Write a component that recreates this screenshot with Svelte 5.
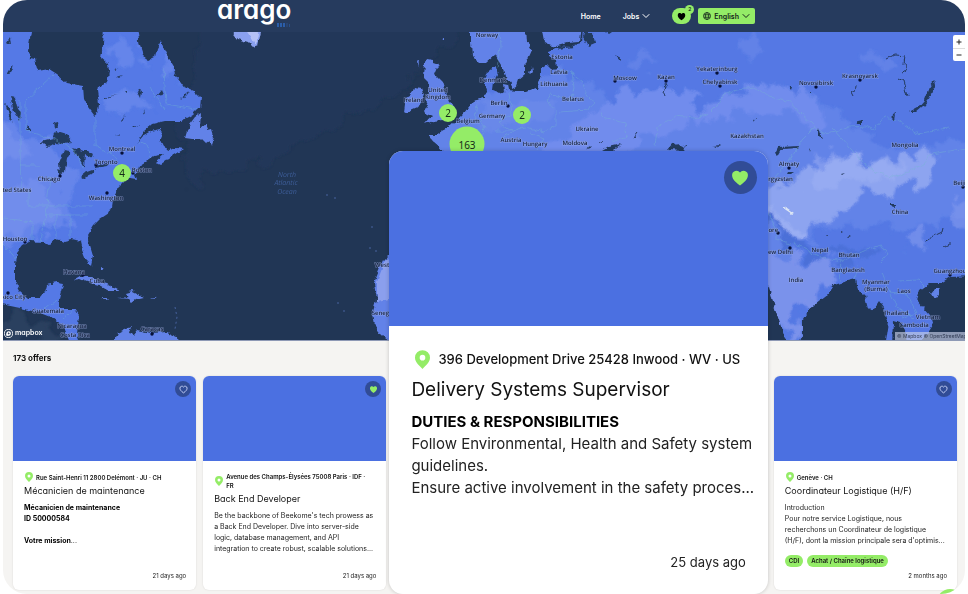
<script>
  const clusters = [
    { count: 4, x: 122, y: 173, size: 18 },
    { count: 2, x: 448, y: 113, size: 18 },
    { count: 2, x: 522, y: 115, size: 18 },
    { count: 163, x: 467, y: 144, size: 35 },
  ];

  const countries = [
    ['United States', 12, 192], ['Cuba', 97, 283], ['Guatemala', 48, 313],
    ['Nicaragua', 72, 328], ['Costa Rica', 75, 337], ['Norway', 487, 37],
    ['Denmark', 493, 82], ['United', 438, 92], ['Kingdom', 438, 99],
    ['Ireland', 414, 102], ['Germany', 492, 118], ['Belgium', 468, 123],
    ['Austria', 511, 142], ['Hungary', 535, 146], ['Estonia', 562, 59],
    ['Latvia', 559, 74], ['Lithuania', 554, 86], ['Belarus', 573, 101],
    ['Ukraine', 587, 131], ['Moldova', 575, 145], ['Kazakhstan', 747, 138],
    ['Mongolia', 905, 147], ['Kyrgyzstan', 777, 181], ['China', 900, 214],
    ['Nepal', 820, 252], ['Bhutan', 849, 257], ['Bangladesh', 848, 272],
    ['India', 796, 282], ['Myanmar', 876, 284], ['(Burma)', 876, 291],
    ['Laos', 904, 293], ['Thailand', 896, 315], ['Vietnam', 928, 319],
    ['Cambodia', 914, 327], ['Senegal', 383, 315], ['Western', 387, 267],
  ];

  // label, label x, label y, dot x, dot y
  const cities = [
    ['Montreal', 122, 151, 122, 153], ['Toronto', 106, 164, 96, 165],
    ['Boston', 142, 172, 133, 173], ['Chicago', 49, 181, 60, 176],
    ['Washington', 106, 200, 107, 193], ['Houston', 15, 241, 25, 242],
    ['Havana', 74, 274, 83, 275], ['Mexico City', 9, 299, 8, 293],
    ['Caracas', 152, 331, 152, 334], ['Berlin', 499, 105, 508, 106],
    ['Moscow', 625, 80, 615, 81], ['Kazan', 666, 79, 666, 81],
    ['Yekaterinburg', 717, 71, 717, 73], ['Chelyabinsk', 720, 84, 720, 86],
    ['Novosibirsk', 816, 85, 816, 87], ['Krasnoyarsk', 860, 78, 860, 80],
    ['Almaty', 789, 166, 789, 168], ['Lahore', 768, 232, 778, 233],
    ['New Delhi', 778, 254, 790, 248], ['Guangzhou', 950, 273, 950, 275],
    ['Beijing', 963, 185, 963, 187],
  ];

  let jobs = $state([
    {
      location: 'Rue Saint-Henri 11 2800 Delémont · JU · CH',
      title: 'Mécanicien de maintenance',
      heading: 'Mécanicien de maintenance\nID 50000584\n\nVotre mission',
      text: '...',
      tags: [],
      age: '21 days ago',
      saved: false,
    },
    {
      location: 'Avenue des Champs-Élysées 75008 Paris · IDF ·\nFR',
      title: 'Back End Developer',
      text: "Be the backbone of Beekome's tech prowess as\na Back End Developer. Dive into server-side\nlogic, database management, and API\nintegration to create robust, scalable solutions...",
      tags: [],
      age: '21 days ago',
      saved: true,
    },
    {
      featured: true,
      location: '396 Development Drive 25428 Inwood · WV · US',
      title: 'Delivery Systems Supervisor',
      heading: 'DUTIES & RESPONSIBILITIES\n',
      text: 'Follow Environmental, Health and Safety system\nguidelines.\nEnsure active involvement in the safety proces...',
      tags: [],
      age: '25 days ago',
      saved: true,
    },
    {
      last: true,
      location: 'Genève · CH',
      title: 'Coordinateur Logistique (H/F)',
      text: "Introduction\nPour notre service Logistique, nous\nrecherchons un Coordinateur de logistique\n(H/F), dont la mission principale sera d'optimis...",
      tags: ['CDI', 'Achat / Chaîne logistique'],
      age: '2 months ago',
      saved: false,
    },
  ]);
</script>

<div class="page">
  <header class="header">
    <a class="logo" href="#home">
      arago
      <svg class="logo-mark" viewBox="0 0 14 4" aria-hidden="true">
        <path d="M1 0v4M4 0v4M7 0v4" stroke="#2d68bd" stroke-width="1.6" />
        <path d="M10 0v4M12.5 1v3" stroke="#2a4f88" stroke-width="1" />
      </svg>
    </a>
    <nav class="nav">
      <a href="#home">Home</a>
      <a class="jobs-link" href="#jobs">
        Jobs
        <svg class="chevron" viewBox="0 0 8 8"><path d="M1 2.5l3 3 3-3" /></svg>
      </a>
      <div class="actions">
        <button class="saved" aria-label="Saved jobs">
          <svg viewBox="0 0 24 24"><path d="M12 22C5 17 2 13 2 8.500A5.500 5.500 0 0 1 12 5a5.500 5.500 0 0 1 10 3.500C22 13 19 17 12 22z" /></svg>
          <span class="saved-count">2</span>
        </button>
        <button class="language">
          <svg class="globe" viewBox="0 0 16 16">
            <circle cx="8" cy="8" r="7" />
            <ellipse cx="8" cy="8" rx="3" ry="7" />
            <path d="M1.500 5.500h13M1.500 10.500h13" />
          </svg>
          English
          <svg class="chevron" viewBox="0 0 8 8"><path d="M1 2.5l3 3 3-3" /></svg>
        </button>
      </div>
    </nav>
  </header>

  <section class="map" aria-label="Map of offers">
    <svg class="map-canvas" viewBox="3 32 962 308" preserveAspectRatio="xMidYMid slice">
      <defs>
        <filter id="coast" x="-5%" y="-5%" width="110%" height="110%">
          <feTurbulence type="fractalNoise" baseFrequency="0.13" numOctaves="3" seed="4" />
          <feDisplacementMap in="SourceGraphic" scale="6" xChannelSelector="R" yChannelSelector="G" />
        </filter>
        <filter id="terrain" x="-5%" y="-5%" width="110%" height="110%">
          <feTurbulence type="fractalNoise" baseFrequency="0.05" numOctaves="4" seed="9" />
          <feDisplacementMap in="SourceGraphic" scale="34" xChannelSelector="R" yChannelSelector="G" />
          <feGaussianBlur stdDeviation="0.8" />
        </filter>
        <clipPath id="eurasia">
          <path d="M583 26H974V276L950 277 941 283 930 283 920 290 917 300 930 315 933 325 926 336 918 348H908L905 330 900 322 893 320 892 348H884L888 322 884 308 879 301 875 307 868 309 865 297 858 290 856 279 848 281 834 285 828 294 810 308 803 320 803 334 797 348H788L779 320 773 302 769 285 760 300H480L446 156 440 147 432 140 428 135 437 135 442 131 450 127 457 120 464 113 474 101 484 98 487 90 484 80 486 73 491 69 495 66 497 74 493 82 492 90 499 93 509 90 517 91 527 91 537 88 542 77 542 68 547 65 552 70 557 69 556 60 548 56 548 51 558 47 571 46 582 43z" />
        </clipPath>
        <clipPath id="americas">
          <path d="M-4 26H32L28 50 30 59 35 60 38 71 49 69 57 74 67 83 83 86 84 99 88 107 94 115 98 112 99 104 97 90 107 82 109 72 108 63 101 57 103 45 104 26H137L140 47 143 56 149 60 155 57 157 48 161 41 165 52 172 62 176 76 183 86 194 91 201 98 200 108 193 115 188 118 182 121 165 121 152 124 143 132 136 143 142 136 151 131 160 129 163 134 160 141 163 147 169 150 177 148 183 149 172 156 160 164 156 162 165 154 154 156 149 160 141 165 135 174 137 179 131 178 124 181 119 186 117 193 113 200 112 207 109 213 100 219 93 226 88 234 90 246 93 256 91 265 86 260 82 250 80 241 72 239 64 241 56 239 50 244 43 242 30 241 22 245 16 253 15 267 15 281 20 291 28 298 40 298 45 292 47 285 57 283 63 284 60 295 58 303 60 309 75 309 79 315 78 326 77 333 82 348H72L66 333 62 325 53 318 40 313 20 308 -4 303z" />
        </clipPath>
      </defs>

      <rect x="0" y="30" width="970" height="312" fill="#213655" />
      <g filter="url(#terrain)">
        <path d="M205 20h265l-70 72-120 60-90 30-12-60z" fill="#25395b" opacity=".7" />
        <path d="M3 310l90 30H3z" fill="#29405f" />
      </g>

      <g filter="url(#coast)">
        <g clip-path="url(#americas)">
          <rect x="-6" y="20" width="226" height="330" fill="#5479e6" />
          <g filter="url(#terrain)">
            <path d="M-10 122l28 5 20 13 22 10 14 28-10 22 8 20-28 18-20 2-10 15h-24z" fill="#6685ea" />
            <path d="M-10 195l41-12 20 10 6 30-28 10-39 2zM0 130l16 4 10 16-10 12-20 4z" fill="#7c96ee" opacity=".5" />
            <path d="M118 36l20 5 4 18-14 8-15-10zM162 45l8 12 5 28-12-8zM103 95l30-6 26 13-13 12-25-2z" fill="#7f99ef" opacity=".4" />
          </g>
          <g class="lake">
            <path d="M41 142l12-3 3-8 10 3 7 8-8 1-10-1-7 5zM60 175l-1-12 5-12 7 1-4 6-2 13zM72 148l10 3 6 0 5 3-1 5-7-4-1 12-4-7zM80 177l5-4 11-4-4 5-9 4zM95 166l14-3-2 3-12 2z" />
            <path d="M10 97l5 1 3 12 3 3-1 8-5-7zM5 103l4 12 4 7-2-13zM10 37l-3 5 4 3zM11 67l-4 7 6-4zM157 96l5-6 2 5zM181 99l9-7-4 5zM104 97l14-2-13 3zM137 89l5 2-1 6zM120 120l4-5-3 6zM53 123l4-1 1 6-4-1zM26 131l2-5 4 5zM113 70l5-2-4 3zM117 77l6-2-4 3zM124 91l5 0-3 2zM143 113l2-3 1 4zM133 127l3-2 3 2zM114 134l5-1-2 2z" />
          </g>
          <path class="border" d="M26 131V100L54 74M26 131l28 8 11 5 10 7 8 18M95 115v31l23 13M20 100v50l1 40M28 190v17M20 165h20M28 206h64M45 215h42M32 224v17M56 215v25M70 215v24M3 218l30 4M164 70l2 34 35 6M150 88l14 22M138 143l10 2 3 16M3 244l14 17M45 308l10-8M64 318l10-8M50 175l-4 40-5 26" />
        </g>

        <g fill="#6282e8">
          <path d="M185 138l4-13 6-8 6-4-1 13 6-1 2 5 4-1 2 7-3 9-3-3-3 2-5-5-8 0z" />
          <path d="M73 280l7-4 8 0 8 5 11 3 12 6-11 0-9-5-12-3-7-3zM119 298l8-1-2-4 7-2 12 6-9 2-4 3-3-3zM101 298l8 0-2 2zM150 297l7 1-3 1zM102 266l2 4-2 0z" />
          <path d="M112 347l5-14 14-7-2 8 4 1 4-5 14 3 15-1 11 5 1 10z" />
          <path d="M395 249l-12 12-9 22 3 17-4 14 2 12 7 9 8 6 10-1V250z" />
          <path d="M471 26v16l1 14 7 7h7l9-8 6 10 4 10 8 13 4-2 2-6 6-5 0-9 3-7 4-9-5-8-1-16zM541 26l3 16 10 5 14-4 12-1 2-16z" />
          <path d="M425 62l2-4 6 1 0 4 6 2-4 10 7 7 3 10 4 10 6 5-3 9 1 4-10 0-10 1-8 3 7-8-8-4 4-7-3-6 4-8-1-9-4-4zM414 87l7 1 3 8-4 10-7 3-9 4 1-8-1-6 7-4zM418 61l2-2-1 8z" />
          <path d="M503 84l5 1 1 5-5 1zM530 75l2-8 1 5zM442 41l2-3 0 4z" />
        </g>
        <path d="M228 26h34l-4 19-5 2-5-5-10-3z" fill="#8aa0ef" />
        <path d="M242 26h17l-3 18-5-5z" fill="#b5c1f5" />
        <path d="M386 258l-9 24 0 20 13-3v-40z" fill="#8b9fed" />

        <g clip-path="url(#eurasia)">
          <rect x="420" y="20" width="560" height="330" fill="#5478e4" />
          <g filter="url(#terrain)">
            <path d="M420 100l70-10 70-20 50 30 110 15 30-15 60-4 40 22 30 30 100-5V215l-70 15-60-5-60 20-10 100H440z" fill="#6283e8" />
            <path d="M600 104l45-15 50 5 5 25 25-25 75-8 15 20 13 18-20 5-18-20-50 2-40 12-30 5-40 18-20 28H555l-10-22z" fill="#718ced" />
            <path d="M760 190l23-10 35-8 30-18 25 6 64-7-8 25-20 14-44-2-25 22-20 14-18 12-34-15z" fill="#8da4f0" />
            <path d="M815 160l35-5 30 8 25 1-20 16-35-2-40 10z" fill="#a0b2f3" opacity=".5" />
            <path d="M755 208l41 12 15 15-12 4-28-14z" fill="#a0b2f4" opacity=".7" />
            <path d="M755 256l43 2 38 4-5 20-30 25-7 35-40-45z" fill="#7a92eb" />
            <path d="M905 236l12-6 8 8-8 10-10-3zM950 210l20-16v40l-19-6z" fill="#7d96ed" opacity=".7" />
            <path d="M735 40l18-4 8 12-10 6zM475 100l30 5 50-2-10 18-60 10zM620 60l20-8 18 12-24 4zM860 60l24-6 12 10-20 8z" fill="#748fec" opacity=".45" />
            <path d="M760 214c20 18 33 32 53 39 22 5 40 2 65-5" fill="none" stroke="#4c70d8" stroke-width="8" />
          </g>
          <path d="M783 206l11 8-2 1-9-6z" fill="#dbe5f4" />
          <g class="lake">
            <path d="M934 81l1 4-4 11-8 10-7 6-7 0 9-5 6-7 5-13zM775 153l3-6 21-1-1 2-16 1-4 7zM668 150l4-5 9-1 4 3-1 4zM584 33l9 0 2 10-7 3-5-9zM562 44l18-2-6 5-17 2zM615 56l6 3-1 3zM602 150l7-4 13-3-6 5-5 5h-7zM585 149l7-3-3 4zM612 32l-3 2-3-2z" />
            <path d="M857 121l5-1 0 4-4 0zM893 114l2-1-1 7-2 0zM817 127l2 8 5 4-7-2zM787 172l7 0-3 2-5 0zM810 148l2 1-1 4zM890 204l4 0 0 3-3-1zM842 231l2 1-2 1zM848 237l3 0-2 1zM790 87l3 0-1 3zM753 120l3-1-2 3zM712 147l8-1-4 3zM840 173l4-1-3 2zM827 236l3 0-2 1z" />
            <path class="river" d="M887 59l8-4 10 1-1 8 3 6-5 3M898 78l5 3 4 15M666 83l2 5-4 3 2 5M855 85l-1 6-3 2 2 4M815 88l-5 5M635 137l3-4M924 242l10-6 8-4 1-4M944 247l6-3 0-3M598 143l4-2" />
          </g>
          <path class="border" d="M655 146l2-18 18-12 18 2 14-3 9-9 7-11 15-6 17-2 14 10 22 5 10 12 22 20 14-2 12-5 17-1 8 4 10-13 14 3 20 14 30-6M833 128l18 20 10 12 13 12 22 5 28-13 8-10 34-6M816 126l-14 14-12 20-16 18M556 68l16 4 2 16-4 12-18-6-5 7 9 10 0 14-12 7-19-5-12 4-18 0M570 72l12 10 5 12 6 8-4 8-30 2M600 112l3 5 22 6 2 14-14 5M477 103l-2 15 10 8-6 14M509 92l3 22-13 8 14 10-10 6M530 132l14 6-8 12M768 213l8 15 0 12 14 4M793 242l23 14 26 5 8-4 14-6 17-6 6 9-6 8M842 261l-2 20M858 264l-3 15M882 272l6 16 10 20 16 10M898 281l20-1 6 6M574 32l-10 9M889 292l18 2 9 19-14 5" />
        </g>
        <path d="M930 294l4-5 6 0-2 7-5 3z" fill="#6283e8" />
        <path class="border" d="M500 32l1 15M500 47l-3 20" />
      </g>
      <path d="M326 195h3M334 198h3M371 227h2M369 248h3M375 251h3M337 303h3M343 311h2M175 307l2 10-2 12" fill="none" stroke="#48639f" stroke-dasharray="2 3" />

      <g class="sea-label">
        <text x="287" y="177">North</text>
        <text x="286" y="185">Atlantic</text>
        <text x="287" y="194">Ocean</text>
      </g>
      <g class="country">
        {#each countries as [name, x, y]}
          <text {x} {y}>{name}</text>
        {/each}
      </g>
      <g class="city">
        {#each cities as [name, x, y, cx, cy]}
          <circle {cx} {cy} r="1.700" />
          <text {x} {y}>{name}</text>
        {/each}
      </g>
    </svg>

    {#each clusters as c}
      <button
        class="cluster"
        style="left: {((c.x - 3) / 962) * 100}%; top: {((c.y - 32) / 308) * 100}%; width: {c.size}px; height: {c.size}px"
      >{c.count}</button>
    {/each}

    <div class="zoom">
      <button aria-label="Zoom in"><svg viewBox="0 0 8 8"><path d="M4 1.500v5M1.500 4h5" /></svg></button>
      <button aria-label="Zoom out"><svg viewBox="0 0 8 8"><path d="M1.500 4h5" /></svg></button>
    </div>
    <a class="mapbox" href="#mapbox">
      <svg viewBox="0 0 20 20">
        <circle cx="10" cy="10" r="9" fill="none" stroke="#fff" stroke-width="2" />
        <path d="M5 15c-1-6 1-10 6-10 3 0 5 3 4 6-1 4-5 5-10 4z" fill="#fff" />
        <path d="M10.500 6.500l1 2.200 2 .8-2 1-1 2-1-2-2-1 2-.8z" fill="#213655" />
      </svg>
      mapbox
    </a>
    <div class="attribution">© Mapbox © OpenStreetMap</div>
  </section>

  <main class="offers">
    <h1>173 offers</h1>
    <div class="grid">
      {#each jobs as job}
        <article class="card" class:featured={job.featured} class:last={job.last}>
          <div class="cover">
            <button class="like" class:saved-like={job.saved} aria-label="Save {job.title}" onclick={() => (job.saved = !job.saved)}>
              <svg viewBox="0 0 24 24"><path d="M12 21C5 16 2.500 12.500 2.500 8.500A5.200 5.200 0 0 1 12 5.500a5.200 5.200 0 0 1 9.500 3C21.500 12.500 19 16 12 21z" /></svg>
            </button>
          </div>
          <div class="body">
            <div class="location">
              <svg class="pin" viewBox="0 0 16 20"><path fill-rule="evenodd" d="M8 0a8 8 0 0 1 8 8c0 5-5 8.500-8 12C5 16.500 0 13 0 8a8 8 0 0 1 8-8zm0 5a3 3 0 1 0 0 6 3 3 0 0 0 0-6z" /></svg>
              <span>{job.location}</span>
            </div>
            <h2>{job.title}</h2>
            <p>{#if job.heading}<strong>{job.heading}</strong>{/if}{job.text}</p>
            <div class="bottom">
              {#if job.tags.length}
                <div class="tags">
                  {#each job.tags as tag}
                    <span class="tag">{tag}</span>
                  {/each}
                </div>
              {/if}
              <time>{job.age}</time>
            </div>
          </div>
        </article>
      {/each}
    </div>
    <button class="chat" aria-label="Open chat"></button>
  </main>
</div>

<style>
  :global(body) {
    background: #fff;
    overflow: hidden;
  }

  .page {
    --green: #94ec67;
    --blue: #4b70e1;
    --navy: #263b5e;
    display: flex;
    flex-direction: column;
    min-height: 100vh;
    margin: 0 3px;
    border-radius: 24px;
    overflow: hidden;
    background: #f5f4f2;
    color: #111;
    font-family: Inter, "Liberation Sans", sans-serif;
  }

  button {
    border: 0;
    padding: 0;
    font-family: inherit;
    color: inherit;
    cursor: pointer;
  }

  a {
    color: inherit;
    text-decoration: none;
  }

  .header {
    display: flex;
    align-items: center;
    justify-content: space-between;
    height: 32px;
    padding: 0 210px 0 214px;
    background: var(--navy);
    color: #fff;
  }

  .logo {
    position: relative;
    height: 32px;
    font-size: 26px;
    font-weight: 600;
    line-height: 20px;
    font-feature-settings: "cv11";
  }

  .logo-mark {
    position: absolute;
    right: 0;
    bottom: 5px;
    width: 14px;
    height: 4px;
  }

  .nav {
    display: flex;
    align-items: center;
    gap: 22px;
    font-size: 7px;
    font-weight: 600;
  }

  .jobs-link,
  .actions {
    display: flex;
    align-items: center;
    gap: 3px;
  }

  .actions {
    gap: 7px;
    color: #14251b;
  }

  .chevron {
    width: 8px;
    height: 8px;
    fill: none;
    stroke: currentColor;
    stroke-linecap: round;
    stroke-linejoin: round;
  }

  .saved {
    position: relative;
    display: grid;
    place-items: center;
    width: 19px;
    height: 16px;
    border-radius: 8px;
    background: var(--green);
  }

  .saved svg {
    width: 9px;
    height: 9px;
    fill: #000;
  }

  .saved-count {
    position: absolute;
    top: -3px;
    right: -3px;
    width: 9px;
    border-radius: 50%;
    background: var(--green);
    font-size: 5px;
    font-weight: 600;
    line-height: 9px;
  }

  .language {
    display: flex;
    align-items: center;
    gap: 3px;
    height: 16px;
    padding: 0 5px;
    border-radius: 2px;
    background: var(--green);
    font-size: 7px;
    font-weight: 600;
  }

  .globe {
    width: 8px;
    height: 8px;
    fill: none;
    stroke: currentColor;
    stroke-width: 1.5;
  }

  .map {
    position: relative;
    height: 308px;
    overflow: hidden;
    border-bottom: 1px solid #8e99b5;
    background: #213655;
  }

  .map-canvas {
    display: block;
    width: 100%;
    height: 100%;
    font-family: "Open Sans", "Noto Sans", sans-serif;
    text-anchor: middle;
    text-rendering: geometricPrecision;
  }

  .lake {
    fill: #243a5e;
  }

  .river {
    fill: none;
    stroke: #243a5e;
  }

  .border {
    fill: none;
    stroke: #76b8cf;
    stroke-width: 0.6;
    stroke-linejoin: round;
    opacity: 0.6;
  }

  .country,
  .city {
    fill: #14213f;
    font-size: 6px;
    font-weight: 600;
    paint-order: stroke;
    stroke: #a3b4e8;
    stroke-width: 1;
    stroke-opacity: 0.6;
  }

  .city circle {
    fill: #071138;
    stroke: none;
  }

  .sea-label {
    fill: #3d5d98;
    font-size: 7px;
    font-style: italic;
  }

  .cluster {
    position: absolute;
    transform: translate(-50%, -50%);
    border-radius: 50%;
    background: var(--green);
    color: #142b18;
    font: 10px "Noto Sans", sans-serif;
  }

  .zoom {
    position: absolute;
    top: 3px;
    right: 0;
    display: flex;
    flex-direction: column;
    width: 12px;
    border-radius: 2px 0 0 2px;
    background: #fff;
  }

  .zoom button {
    display: grid;
    place-items: center;
    height: 13px;
    background: none;
  }

  .zoom button + button {
    border-top: 1px solid #ddd;
  }

  .zoom svg {
    width: 8px;
    height: 8px;
    stroke: #222;
  }

  .mapbox {
    position: absolute;
    left: 1px;
    bottom: 2px;
    display: flex;
    align-items: center;
    gap: 2px;
    color: #fff;
    font-size: 7px;
    font-weight: 600;
    line-height: 10px;
    font-feature-settings: "cv11";
  }

  .mapbox svg {
    width: 9px;
    height: 9px;
  }

  .attribution {
    position: absolute;
    right: 0;
    bottom: 0;
    width: 68px;
    padding-left: 2px;
    overflow: hidden;
    background: rgba(200, 208, 232, 0.65);
    color: #333d55;
    font-size: 5px;
    line-height: 8px;
    white-space: nowrap;
  }

  .offers {
    position: relative;
    flex: 1;
    padding: 12px 8px 4px 10px;
  }

  h1 {
    margin: 0 0 12px;
    font-size: 8px;
    font-weight: 700;
    line-height: 11px;
  }

  .grid {
    position: relative;
    display: grid;
    grid-template-columns: repeat(5, 1fr);
    gap: 7px;
  }

  .card {
    display: flex;
    flex-direction: column;
    min-height: 214px;
    border-radius: 6px;
    overflow: hidden;
    background: #fff;
    box-shadow: 0 0 2px rgba(0, 0, 0, 0.12);
  }

  .card.last {
    grid-column: 5;
  }

  .cover {
    position: relative;
    height: 85px;
    background: var(--blue);
  }

  .like {
    position: absolute;
    top: 5px;
    right: 5px;
    display: grid;
    place-items: center;
    width: 16px;
    height: 16px;
    border-radius: 50%;
    background: #314c96;
  }

  .like svg {
    width: 9px;
    height: 9px;
    fill: none;
    stroke: #c7d2f7;
    stroke-width: 2.5;
  }

  .like.saved-like svg {
    fill: var(--green);
    stroke: none;
  }

  .body {
    display: flex;
    flex: 1;
    flex-direction: column;
    padding: 11px 10px 9px 11px;
  }

  .location {
    display: flex;
    align-items: center;
    gap: 3px;
    min-height: 10px;
    padding-left: 1px;
    font-size: 6px;
    font-weight: 600;
    line-height: 9px;
    white-space: pre;
  }

  .pin {
    flex: none;
    width: 8px;
    height: 10px;
    fill: var(--green);
  }

  h2 {
    margin: 2px 0 4px;
    font-size: 9px;
    font-weight: 400;
    line-height: 14px;
    font-feature-settings: "cv11";
    white-space: nowrap;
  }

  p {
    margin: 0;
    font-size: 7px;
    line-height: 11px;
    color: #222;
    white-space: pre;
  }

  strong {
    font-weight: 700;
    color: #000;
  }

  .bottom {
    display: flex;
    flex-direction: column;
    gap: 3px;
    margin-top: auto;
  }

  .tags {
    display: flex;
    gap: 4px;
  }

  .tag {
    padding: 0 4px;
    border-radius: 6px;
    background: var(--green);
    font-size: 6px;
    font-weight: 600;
    line-height: 12px;
  }

  time {
    align-self: flex-end;
    font-size: 6px;
    line-height: 11px;
    color: #222;
  }

  .card.featured {
    position: absolute;
    grid-column: 3 / 5;
    top: -225px;
    right: -1px;
    bottom: -4px;
    left: -4px;
    z-index: 2;
    border-radius: 14px;
    box-shadow: 0 0 4px rgba(0, 0, 0, 0.2);
  }

  .featured .cover {
    height: 175px;
  }

  .featured .like {
    top: 10px;
    right: 11px;
    width: 33px;
    height: 33px;
  }

  .featured .like svg {
    width: 20px;
    height: 20px;
  }

  .featured .body {
    padding: 23px 22px 21px;
  }

  .featured .location {
    gap: 8px;
    padding-left: 4px;
    font-size: 13px;
    font-weight: 500;
    line-height: 20px;
  }

  .featured .pin {
    width: 15px;
    height: 19px;
  }

  .featured h2 {
    margin: 7px 0;
    font-size: 19px;
    line-height: 28px;
  }

  .featured p {
    font-size: 15px;
    line-height: 22px;
  }

  .featured time {
    font-size: 13px;
    line-height: 22px;
  }

  .chat {
    position: absolute;
    right: 2px;
    bottom: -21px;
    width: 26px;
    height: 26px;
    border-radius: 50%;
    background: var(--green);
  }
</style>
